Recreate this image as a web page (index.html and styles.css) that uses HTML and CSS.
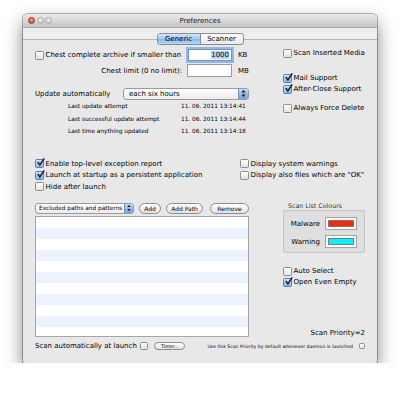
FILE: index.html
```html
<!DOCTYPE html>
<html>

<head>
    <title>Preferences</title>
    <link rel="stylesheet" href="styles.css">
</head>

<body>
    <div class="window">
        <div class="titlebar">
            <div class="lights">
                <span class="light close"></span>
                <span class="light"></span>
                <span class="light"></span>
            </div>
            <div class="title">Preferences</div>
            <div></div>
        </div>

        <div class="tabstrip">
            <div class="segmented">
                <span class="seg selected">Generic</span>
                <span class="seg">Scanner</span>
            </div>
        </div>

        <div class="content">
            <!-- archive limits, update schedule and right-hand options -->
            <div class="top">
                <div class="top-left">
                    <div class="field-grid">
                        <div class="field-label"><span class="cb"></span>Chest complete archive if smaller than</div>
                        <div class="field focused"><span class="sel">1000</span></div>
                        <div class="unit">KB</div>

                        <div class="field-label right">Chest limit (0 no limit):</div>
                        <div class="field"></div>
                        <div class="unit">MB</div>
                    </div>

                    <div class="update-row">
                        <span class="update-label">Update automatically</span>
                        <div class="popup wide">
                            <span class="popup-text">each six hours</span>
                            <span class="arrows">
                                <svg width="9" height="11" viewBox="0 0 9 11">
                                    <path d="M2.5 4.5 L4.5 2 L6.5 4.5 Z M2.5 6.5 L4.5 9 L6.5 6.5 Z" fill="#111" />
                                </svg>
                            </span>
                        </div>
                    </div>

                    <div class="history">
                        <span class="hist-label">Last update attempt</span>
                        <span>11. 06. 2011 13:14:41</span>
                        <span class="hist-label">Last successful update attempt</span>
                        <span>11. 06. 2011 13:14:44</span>
                        <span class="hist-label">Last time anything updated</span>
                        <span>11. 06. 2011 13:14:18</span>
                    </div>
                </div>

                <div class="top-right">
                    <div class="check"><span class="cb"></span>Scan Inserted Media</div>
                    <div class="check spaced"><span class="cb on"><svg viewBox="0 0 10 10"><path d="M2 4.5 L4.3 7.6 L9.2 0.4" /></svg></span>Mail Support</div>
                    <div class="check"><span class="cb on"><svg viewBox="0 0 10 10"><path d="M2 4.5 L4.3 7.6 L9.2 0.4" /></svg></span>After-Close Support</div>
                    <div class="check gap"><span class="cb"></span>Always Force Delete</div>
                </div>
            </div>

            <!-- launch behaviour -->
            <div class="middle">
                <div class="check tall"><span class="cb on"><svg viewBox="0 0 10 10"><path d="M2 4.5 L4.3 7.6 L9.2 0.4" /></svg></span>Enable top-level exception report</div>
                <div class="check tall"><span class="cb"></span>Display system warnings</div>
                <div class="check tall"><span class="cb on"><svg viewBox="0 0 10 10"><path d="M2 4.5 L4.3 7.6 L9.2 0.4" /></svg></span>Launch at startup as a persistent application</div>
                <div class="check tall"><span class="cb"></span>Display also files which are "OK"</div>
                <div class="check tall"><span class="cb"></span>Hide after launch</div>
            </div>

            <!-- excluded paths list and scan colours -->
            <div class="lower">
                <div class="lower-left">
                    <div class="list-bar">
                        <div class="popup small">
                            <span class="popup-text">Excluded paths and patterns</span>
                            <span class="arrows">
                                <svg width="8" height="10" viewBox="0 0 9 11">
                                    <path d="M2.5 4.5 L4.5 2 L6.5 4.5 Z M2.5 6.5 L4.5 9 L6.5 6.5 Z" fill="#111" />
                                </svg>
                            </span>
                        </div>
                        <span class="btn add">Add</span>
                        <span class="btn add-path">Add Path</span>
                        <span class="btn remove">Remove</span>
                    </div>
                    <div class="list"></div>
                </div>

                <div class="lower-right">
                    <div class="group-title">Scan List Colours</div>
                    <div class="group">
                        <div class="colour-row">
                            <span>Malware</span>
                            <span class="well"><span class="swatch red"></span></span>
                        </div>
                        <div class="colour-row">
                            <span>Warning</span>
                            <span class="well"><span class="swatch cyan"></span></span>
                        </div>
                    </div>
                    <div class="check auto"><span class="cb"></span>Auto Select</div>
                    <div class="check"><span class="cb on"><svg viewBox="0 0 10 10"><path d="M2 4.5 L4.3 7.6 L9.2 0.4" /></svg></span>Open Even Empty</div>
                    <div class="priority">Scan Priority=2</div>
                </div>
            </div>

            <div class="bottom">
                <span>Scan automatically at launch</span>
                <span class="cb mini"></span>
                <span class="btn timer">Timer...</span>
                <span class="tiny">Use this Scan Priority by default whenever daemon is launched</span>
                <span class="cb tiny-cb"></span>
            </div>
        </div>
    </div>
</body>

</html>
```

FILE: styles.css
```css
body {
    margin: 0;
    padding: 14px 0 0 23px;
    background: #fff;
    font-family: "DejaVu Sans", sans-serif;
    font-size: 7px;
    color: #000;
}

.window {
    width: 354px;
    height: 349px;
    background: #e8e8e8;
    border-radius: 5px 5px 2px 2px;
    box-shadow: 0 0 0 1px rgba(0, 0, 0, 0.28), 0 8px 18px rgba(0, 0, 0, 0.5);
    display: flex;
    flex-direction: column;
}

/* title bar */
.titlebar {
    height: 13px;
    display: grid;
    grid-template-columns: 1fr auto 1fr;
    align-items: center;
    background: linear-gradient(#ebebeb, #c6c6c6);
    border-bottom: 1px solid #a8a8a8;
    border-radius: 5px 5px 0 0;
}

.lights {
    display: flex;
    gap: 1.5px;
    padding-left: 5px;
}

.light {
    width: 7px;
    height: 7px;
    border-radius: 50%;
    box-sizing: border-box;
    border: 1px solid #a9a9a9;
    background: radial-gradient(circle at 50% 35%, #f2f2f2, #c4c4c4);
}

.light.close {
    border-color: #b02a22;
    background: radial-gradient(circle at 50% 35%, #ff9c8e, #dc3a2c);
}

.title {
    font-size: 7px;
    color: #222;
}

/* tab selector */
.tabstrip {
    height: 11px;
    background: #eeeeee;
    border-bottom: 1px solid #b6b6b6;
    display: flex;
    justify-content: center;
}

.segmented {
    position: relative;
    z-index: 1;
    display: flex;
    height: 12px;
    margin-top: 5px;
    box-sizing: border-box;
    border: 1px solid #8c8c8c;
    border-radius: 3px;
    overflow: hidden;
    background: linear-gradient(#ffffff, #e9e9e9);
}

.seg {
    width: 42px;
    display: flex;
    align-items: center;
    justify-content: center;
}

.seg.selected {
    border-right: 1px solid #7c8fa8;
    background: linear-gradient(#d3e7fa, #9cc8f1 50%, #84b9ec 51%, #b3d7f7);
}

.content {
    padding: 7px 12px 0 12px;
}

/* checkbox */
.cb {
    display: inline-block;
    position: relative;
    width: 9px;
    height: 9px;
    box-sizing: border-box;
    border: 1px solid #8e8e8e;
    border-radius: 1.5px;
    background: linear-gradient(#ffffff, #e2e2e2);
    margin-right: 1.5px;
    flex: none;
}

.cb.on {
    border-color: #5a7fa8;
    background: linear-gradient(#cfe4f8, #86b8e8);
}

.cb svg {
    position: absolute;
    left: 0;
    top: -2px;
    width: 9px;
    height: 9px;
    fill: none;
    stroke: #16233a;
    stroke-width: 1.7;
}

.check {
    display: flex;
    align-items: center;
    height: 11px;
}

.check.tall {
    height: 11.5px;
}

/* top section */
.top {
    display: grid;
    grid-template-columns: 248px 1fr;
}

.field-grid {
    display: grid;
    grid-template-columns: 152px 46px auto;
    grid-template-rows: 16px 15px;
    align-items: center;
}

.field-label {
    display: flex;
    align-items: center;
}

.field-label.right {
    justify-content: flex-end;
    padding-right: 5px;
}

.field {
    width: 45px;
    height: 13px;
    box-sizing: border-box;
    border: 1px solid #9a9a9a;
    background: #fff;
    display: flex;
    align-items: center;
    justify-content: flex-end;
    padding-right: 2px;
}

.field.focused {
    border-color: #6f94c6;
    box-shadow: 0 0 0 2px #8fb8ec;
    width: 44px;
    height: 12px;
    margin-left: 1px;
}

.sel {
    background: #b5d5ff;
}

.unit {
    padding-left: 5px;
}

.update-row {
    display: flex;
    align-items: center;
    height: 13px;
    margin-top: 9px;
}

.update-label {
    width: 88px;
}

.popup {
    height: 12px;
    box-sizing: border-box;
    border: 1px solid #9a9a9a;
    border-radius: 3px;
    background: linear-gradient(#ffffff, #ececec);
    display: flex;
    align-items: center;
    padding-left: 5px;
    overflow: hidden;
}

.popup.wide {
    width: 126px;
}

.popup.small {
    width: 99px;
    height: 11px;
    padding-left: 3px;
    font-size: 5.8px;
}

.arrows {
    margin-left: auto;
    width: 9px;
    height: 100%;
    display: flex;
    align-items: center;
    justify-content: center;
    border-left: 1px solid #6f8fb5;
    background: linear-gradient(#b9d8f6, #6ea7e2);
}

.popup.small .arrows {
    width: 8px;
}

.history {
    display: grid;
    grid-template-columns: 146px auto;
    grid-auto-rows: 12.5px;
    align-items: center;
    font-size: 5.8px;
}

.hist-label {
    padding-left: 33px;
}

.top-right .check:first-child {
    margin-top: 0.5px;
}

.check.spaced {
    margin-top: 14px;
}

.check.gap {
    margin-top: 8px;
}

/* launch options */
.middle {
    display: grid;
    grid-template-columns: 205px 1fr;
    margin-top: 20.5px;
}

/* list and colours */
.lower {
    display: grid;
    grid-template-columns: 248px 1fr;
    margin-top: 9.5px;
}

.list-bar {
    display: flex;
    align-items: center;
    height: 12px;
}

.btn {
    height: 11px;
    box-sizing: border-box;
    border: 1px solid #8c8c8c;
    border-radius: 6px;
    background: linear-gradient(#ffffff, #e2e2e2);
    display: flex;
    align-items: center;
    justify-content: center;
    font-size: 6px;
}

.btn.add {
    width: 22px;
    margin-left: 5px;
}

.btn.add-path {
    width: 37px;
    margin-left: 5px;
}

.btn.remove {
    width: 39px;
    margin-left: 7px;
}

.list {
    width: 214px;
    height: 121px;
    margin-top: 2px;
    box-sizing: border-box;
    border: 1px solid #a6a6a6;
    background: repeating-linear-gradient(#ffffff 0 11px, #edf3fe 11px 22px);
}

.lower-right {
    display: flex;
    flex-direction: column;
}

.group-title {
    height: 8px;
    line-height: 8px;
    padding-left: 5px;
    font-size: 6.3px;
    color: #333;
}

.group {
    width: 82px;
    height: 43px;
    box-sizing: border-box;
    border: 1px solid #c4c4c4;
    border-radius: 2px;
    background: #dfdfdf;
    padding: 6px 7px 0 0;
    display: flex;
    flex-direction: column;
    gap: 5px;
}

.colour-row {
    display: flex;
    align-items: center;
    justify-content: flex-end;
    gap: 5px;
    height: 13px;
}

.well {
    width: 32px;
    height: 13px;
    box-sizing: border-box;
    border: 1px solid #a3a3a3;
    background: #fff;
    padding: 2px;
    display: flex;
}

.swatch {
    flex: 1;
    border: 1px solid #7a7a7a;
}

.swatch.red {
    background: #ff2600;
}

.swatch.cyan {
    background: #00f6ff;
}

.check.auto {
    margin-top: 12.5px;
}

.priority {
    margin-top: auto;
    text-align: right;
    height: 8px;
    line-height: 8px;
}

/* bottom row */
.bottom {
    display: flex;
    align-items: center;
    height: 12px;
    margin-top: 3px;
}

.cb.mini {
    width: 8px;
    height: 8px;
    margin-left: 3px;
}

.btn.timer {
    width: 31px;
    height: 8px;
    margin-left: 5px;
    font-size: 4.8px;
}

.tiny {
    margin-left: auto;
    font-size: 4.6px;
}

.cb.tiny-cb {
    width: 6px;
    height: 6px;
    margin-left: 6px;
    margin-right: 0;
}
```
